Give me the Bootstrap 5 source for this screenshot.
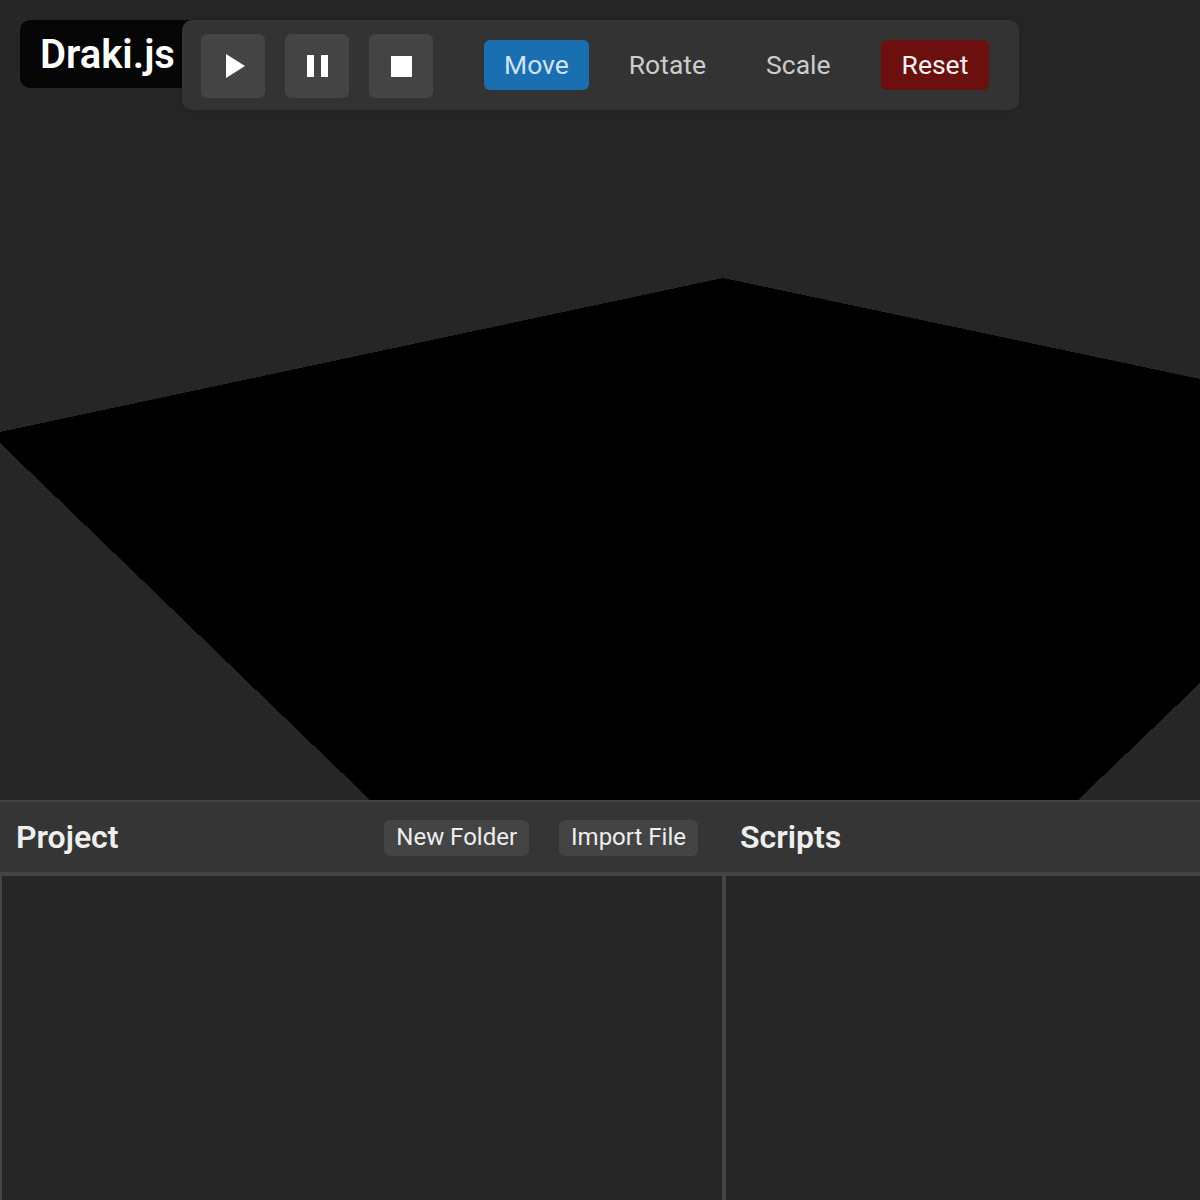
<!DOCTYPE html>
<html lang="en">
<head>
    <meta charset="UTF-8">
    <meta name="viewport" content="width=device-width, initial-scale=1.0">
    <title>Draki.js</title>
    <link href="https://cdn.jsdelivr.net/npm/bootstrap@5.3.0/dist/css/bootstrap.min.css" rel="stylesheet">
    <style>
        html, body { height: 100%; }
        body { background: #262626; font-family: Roboto, "Liberation Sans", sans-serif; overflow: hidden; }
        #viewport { height: 800px; position: relative; overflow: hidden; }
        #scene { position: absolute; inset: 0; }
        .logo { position: absolute; left: 20px; top: 20px; width: 180px; height: 68px; padding: 13px 20px; background: #060606; color: #fff; font-size: 40px; font-weight: 600; line-height: 44px; border-radius: 10px; }
        .toolbar { position: absolute; left: 182px; top: 20px; width: 837px; height: 90px; padding: 15px 19px 13px; background: #333; border-radius: 10px; box-shadow: 0 0 10px rgba(0,0,0,.15); }
        .tools { gap: 20px; }
        .tool-btn { width: 64px; height: 64px; padding: 0; background: #444; border: 0; border-radius: 6px; }
        .modes { gap: 20px; margin-left: 51px; margin-top: -2px; }
        .mode-btn { height: 50px; padding: 0 20px; border: 0; border-radius: 6px; background: transparent; color: #ccc; font-size: 26.5px; line-height: 50px; }
        .mode-btn.active { background: #1a6fb0; color: #cfe3f3; }
        .mode-btn.reset { padding: 0 21px; background: #6b0f0f; color: #f2f2f2; margin-left: 10px; }
        #bottom { height: 400px; border-top: 2px solid #444; overflow: hidden; }
        .panel-left { width: 724px; }
        .panel-head { height: 72px; padding: 1px 16px 0; background: #353535; border-bottom: 2px solid #444; }
        .panel-head h2 { margin: 0; color: #eee; font-size: 32px; font-weight: 600; }
        .panel-body { height: 340px; border: 2px solid #444; }
        .panel-right .panel-body { border-right: 0; }
        .head-btn { height: 36px; padding: 0 12px 1px; background: #444; border: 0; border-radius: 6px; color: #eee; font-size: 24px; line-height: 34px; }
        .head-btns { gap: 30px; margin-right: 10px; }
    </style>
</head>
<body>
    <div id="viewport">
        <svg id="scene" width="1200" height="800" viewBox="0 0 1200 800" shape-rendering="crispEdges">
            <polygon points="0,432 723,278 1200,379 1200,683 1078,800 370,800 0,443" fill="#000"></polygon>
        </svg>
        <div class="logo">Draki.js</div>
        <div class="toolbar d-flex align-items-center">
            <div class="d-flex tools">
                <button class="tool-btn d-flex align-items-center justify-content-center" aria-label="Play">
                    <svg width="24" height="24" viewBox="0 0 24 24"><polygon points="5,0 24,12 5,24" fill="#fff"></polygon></svg>
                </button>
                <button class="tool-btn d-flex align-items-center justify-content-center" aria-label="Pause">
                    <svg width="22" height="24" viewBox="0 0 22 24"><rect x="1" y="1" width="7" height="22" fill="#fff"></rect><rect x="15" y="1" width="7" height="22" fill="#fff"></rect></svg>
                </button>
                <button class="tool-btn d-flex align-items-center justify-content-center" aria-label="Stop">
                    <svg width="21" height="21" viewBox="0 0 21 21"><rect width="21" height="21" fill="#fff"></rect></svg>
                </button>
            </div>
            <div class="d-flex modes">
                <button class="mode-btn active">Move</button>
                <button class="mode-btn">Rotate</button>
                <button class="mode-btn">Scale</button>
                <button class="mode-btn reset">Reset</button>
            </div>
        </div>
    </div>
    <div id="bottom" class="d-flex">
        <div class="panel-left">
            <div class="panel-head d-flex align-items-center justify-content-between">
                <h2>Project</h2>
                <div class="d-flex head-btns">
                    <button class="head-btn">New Folder</button>
                    <button class="head-btn">Import File</button>
                </div>
            </div>
            <div class="panel-body"></div>
        </div>
        <div class="panel-right flex-grow-1">
            <div class="panel-head d-flex align-items-center">
                <h2>Scripts</h2>
            </div>
            <div class="panel-body"></div>
        </div>
    </div>
    <script src="https://cdn.jsdelivr.net/npm/bootstrap@5.3.0/dist/js/bootstrap.bundle.min.js"></script>
</body>
</html>
